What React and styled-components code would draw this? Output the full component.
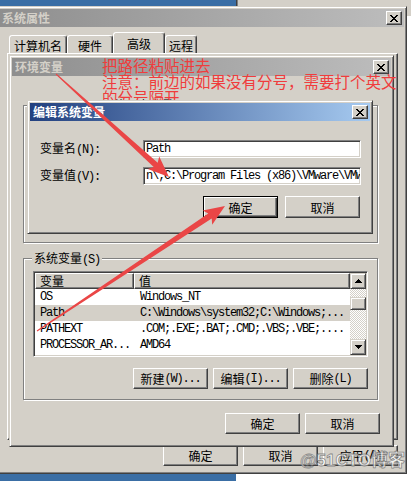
import React from "react";
import styled, { createGlobalStyle, css } from "styled-components";

const FACE = "#d4d0c8";
const UI_FONT = `"Noto Sans CJK SC", "Liberation Sans", sans-serif`;
const MONO = `"Liberation Mono", "Noto Sans CJK SC", monospace`;

const GlobalStyle = createGlobalStyle`
  html, body { margin: 0; padding: 0; background: #fff; }
  body { width: 411px; height: 481px; overflow: hidden; }
  *, *::before, *::after { box-sizing: border-box; }
`;

const Desktop = styled.div`
  position: relative;
  width: 411px;
  height: 481px;
  overflow: hidden;
  background: linear-gradient(to right, #3a6ea5 0 236px, #ffffff 236px);
  font-family: ${UI_FONT};
  font-size: 12px;
  color: #000;
`;

const BackWindow = styled.div`
  position: absolute;
  left: 236px;
  top: -4px;
  width: 190px;
  height: 22px;
  z-index: 1;
  background: ${FACE};
  border-left: 1px solid #404040;
  box-shadow: inset 1px 0 #808080, inset 0 -2px #fff;
`;

const Window = styled.div`
  position: absolute;
  left: ${(p) => p.$x}px;
  top: ${(p) => p.$y}px;
  width: ${(p) => p.$w}px;
  height: ${(p) => p.$h}px;
  z-index: ${(p) => p.$z};
  background: ${FACE};
  border: 1px solid;
  border-color: ${FACE} #404040 #404040 ${FACE};
  box-shadow: inset 1px 1px #fff, inset -1px -1px #808080;
  padding: 2px;
  display: flex;
  flex-direction: column;
`;

const TitleBar = styled.div`
  flex: none;
  height: 18px;
  display: flex;
  align-items: center;
  justify-content: space-between;
  padding: 0 2px 0 3px;
  background: ${(p) =>
    p.$active
      ? "linear-gradient(to right, #22407f, #a6caf0)"
      : "linear-gradient(to right, #8e8e8e, #bdbdbd)"};
`;

const TitleText = styled.span`
  color: ${(p) => (p.$active ? "#fff" : FACE)};
  font-weight: bold;
  font-size: 12px;
  line-height: 14px;
  white-space: nowrap;
`;

const CloseBox = styled.div`
  width: 16px;
  height: 14px;
  background: ${FACE};
  border: 1px solid;
  border-color: #fff #404040 #404040 #fff;
  box-shadow: inset -1px -1px #808080;
  display: flex;
  align-items: center;
  justify-content: center;
  padding-right: 1px;
`;

const CloseButton = () => (
  <CloseBox>
    <svg width="8" height="7" viewBox="0 0 8 7" shapeRendering="crispEdges">
      <path
        fill="#000"
        d="M0 0h2v1H0zM6 0h2v1H6zM1 1h2v1H1zM5 1h2v1H5zM2 2h4v1H2zM3 3h2v1H3zM2 4h4v1H2zM1 5h2v1H1zM5 5h2v1H5zM0 6h2v1H0zM6 6h2v1H6z"
      />
    </svg>
  </CloseBox>
);

const Latin = styled.span`
  font-family: ${MONO};
  letter-spacing: -1.2px;
`;

const Button = styled.div`
  flex: none;
  width: 75px;
  height: ${(p) => p.$h || 21}px;
  background: ${FACE};
  display: flex;
  align-items: center;
  justify-content: center;
  font-size: 12px;
  white-space: nowrap;
  border: 1px solid;
  border-color: #fff #404040 #404040 #fff;
  box-shadow: inset -1px -1px #808080;
  ${(p) =>
    p.$default &&
    css`
      border-color: #000;
      box-shadow: inset 1px 1px #fff, inset -1px -1px #404040,
        inset -2px -2px #808080;
    `}
`;

const ButtonRow = styled.div`
  flex: none;
  display: flex;
  justify-content: flex-end;
  gap: ${(p) => p.$gap}px;
  margin-top: ${(p) => p.$mt}px;
  margin-right: ${(p) => p.$mr || 0}px;
`;

/* ---------- 系统属性 ---------- */
const SysBody = styled.div`
  flex: 1;
  display: flex;
  flex-direction: column;
  padding: 0 6px 5px 8px;
`;

const TabStrip = styled.div`
  flex: none;
  height: 21px;
  margin-top: 5px;
  display: flex;
  align-items: flex-end;
  padding-left: 2px;
`;

const Tab = styled.div`
  width: ${(p) => p.$w}px;
  height: ${(p) => (p.$active ? 21 : 18)}px;
  background: ${FACE};
  border: 1px solid;
  border-bottom: none;
  border-color: #fff #404040 transparent #fff;
  border-radius: 3px 3px 0 0;
  box-shadow: inset -1px 0 #808080;
  display: flex;
  align-items: center;
  justify-content: center;
  padding-top: ${(p) => (p.$active ? 0 : 2)}px;
  font-size: 12px;
  white-space: nowrap;
`;

const TabPanel = styled.div`
  flex: 1;
  border: 1px solid;
  border-color: #fff #404040 #404040 #fff;
  box-shadow: inset -1px -1px #808080;
`;

/* ---------- 环境变量 ---------- */
const EnvBody = styled.div`
  flex: 1;
  display: flex;
  flex-direction: column;
  padding: 0 13px 0 11px;
`;

const GroupBox = styled.div`
  flex: none;
  height: ${(p) => (p.$h ? `${p.$h}px` : "auto")};
  margin-top: ${(p) => p.$mt}px;
  border: 1px solid #808080;
  box-shadow: inset 1px 1px #fff, 1px 1px #fff;
  padding: 0 9px 10px 9px;
  display: flex;
  flex-direction: column;
`;

const Caption = styled.div`
  width: fit-content;
  margin: -8px 0 0 -1px;
  padding: 0 2px;
  height: 14px;
  line-height: 14px;
  background: ${FACE};
  white-space: nowrap;
  font-size: 12px;
`;

const ListView = styled.div`
  flex: none;
  height: 86px;
  margin-top: 6px;
  display: flex;
  background: #fff;
  border: 1px solid;
  border-color: #808080 #fff #fff #808080;
  box-shadow: inset 1px 1px #404040, inset -1px -1px ${FACE};
  padding: 1px;
`;

const ListBody = styled.div`
  flex: 1;
  display: flex;
  flex-direction: column;
  overflow: hidden;
`;

const HeaderRow = styled.div`
  flex: none;
  display: flex;
  height: 16px;
`;

const HeaderCell = styled.div`
  flex: none;
  width: ${(p) => p.$w}px;
  background: ${FACE};
  border: 1px solid;
  border-color: #fff #404040 #404040 #fff;
  box-shadow: inset -1px -1px #808080;
  padding-left: 4px;
  display: flex;
  align-items: center;
  font-size: 12px;
  line-height: 14px;
`;

const Row = styled.div`
  flex: none;
  display: flex;
  height: 16px;
  align-items: center;
  background: ${(p) => (p.$selected ? FACE : "transparent")};
`;

const Cell = styled.div`
  flex: none;
  width: ${(p) => p.$w}px;
  padding-left: ${(p) => p.$pl}px;
  font-family: ${MONO};
  letter-spacing: -1.2px;
  font-size: 12px;
  white-space: nowrap;
  overflow: hidden;
`;

const ScrollBar = styled.div`
  flex: none;
  width: 16px;
  display: flex;
  flex-direction: column;
`;

const ScrollArrow = styled.div`
  flex: none;
  height: 16px;
  background: ${FACE};
  border: 1px solid;
  border-color: ${FACE} #404040 #404040 ${FACE};
  box-shadow: inset 1px 1px #fff, inset -1px -1px #808080;
  display: flex;
  align-items: center;
  justify-content: center;
`;

const Track = styled.div`
  flex: 1;
  background: repeating-conic-gradient(${FACE} 0 25%, #fff 0 50%) 0 0 / 2px 2px;
  padding-top: 8px;
`;

const Thumb = styled.div`
  height: 13px;
  background: ${FACE};
  border: 1px solid;
  border-color: ${FACE} #404040 #404040 ${FACE};
  box-shadow: inset 1px 1px #fff, inset -1px -1px #808080;
`;

const Triangle = ({ down }) => (
  <svg
    width="7"
    height="4"
    viewBox="0 0 7 4"
    shapeRendering="crispEdges"
    style={down ? { transform: "scaleY(-1)" } : undefined}
  >
    <path fill="#000" d="M3 0h1v1h1v1h1v1h1v1H0V3h1V2h1V1h1z" />
  </svg>
);

/* ---------- 编辑系统变量 ---------- */
const DialogBody = styled.div`
  flex: 1;
  display: flex;
  flex-direction: column;
  padding: 0 9px 0 10px;
`;

const Form = styled.div`
  margin-top: 19px;
  display: grid;
  grid-template-columns: 103px 218px;
  row-gap: 9px;
  align-items: center;
`;

const Label = styled.div`
  font-size: 12px;
  line-height: 14px;
  white-space: nowrap;
`;

const Field = styled.div`
  height: 18px;
  background: #fff;
  border: 1px solid;
  border-color: #808080 #fff #fff #808080;
  box-shadow: inset 1px 1px #404040, inset -1px -1px ${FACE};
  padding: 0 2px 0 2px;
  display: flex;
  align-items: center;
  overflow: hidden;
  white-space: nowrap;
  font-family: ${MONO};
  letter-spacing: -1.2px;
  font-size: 12px;
`;

/* ---------- overlays ---------- */
const Annotation = styled.div`
  position: absolute;
  left: 102px;
  top: 57px;
  z-index: 4;
  color: #f03c3c;
  font-family: ${UI_FONT};
  font-size: 15.5px;
  line-height: 16px;
  white-space: nowrap;
`;

const ArrowLayer = styled.svg`
  position: absolute;
  left: 0;
  top: 0;
  z-index: 6;
  pointer-events: none;
`;

const Watermark = styled.div`
  position: absolute;
  left: 300px;
  top: 451px;
  z-index: 7;
  font-family: "Liberation Sans", "Noto Sans CJK SC", sans-serif;
  font-weight: bold;
  font-size: 17px;
  line-height: 20px;
  color: rgba(255, 255, 255, 0.75);
  -webkit-text-stroke: 0.8px rgba(110, 110, 110, 0.8);
  white-space: nowrap;
`;

function arrowPoints(x1, y1, x2, y2, w1, w2, hl, hw) {
  const dx = x2 - x1;
  const dy = y2 - y1;
  const len = Math.hypot(dx, dy);
  const ux = dx / len;
  const uy = dy / len;
  const nx = -uy;
  const ny = ux;
  const bx = x2 - ux * hl;
  const by = y2 - uy * hl;
  const p = (x, y, s) => `${(x + nx * s).toFixed(1)},${(y + ny * s).toFixed(1)}`;
  return [
    p(x1, y1, w1 / 2),
    p(bx, by, w2 / 2),
    p(bx - ux * 3, by - uy * 3, hw / 2),
    `${x2},${y2}`,
    p(bx - ux * 3, by - uy * 3, -hw / 2),
    p(bx, by, -w2 / 2),
    p(x1, y1, -w1 / 2),
  ].join(" ");
}

const listRows = [
  { name: "OS", value: "Windows_NT" },
  { name: "Path", value: "C:\\Windows\\system32;C:\\Windows;...", selected: true },
  { name: "PATHEXT", value: ".COM;.EXE;.BAT;.CMD;.VBS;.VBE;...." },
  { name: "PROCESSOR_AR...", value: "AMD64" },
];

export default function App() {
  return (
    <>
      <GlobalStyle />
      <Desktop>
        <BackWindow />

        <Window $x={-4} $y={6} $w={411} $h={468} $z={2}>
          <TitleBar>
            <TitleText>系统属性</TitleText>
            <CloseButton />
          </TitleBar>
          <SysBody>
            <TabStrip>
              <Tab $w={58}>计算机名</Tab>
              <Tab $w={46}>硬件</Tab>
              <Tab $w={52} $active>
                高级
              </Tab>
              <Tab $w={32}>远程</Tab>
            </TabStrip>
            <TabPanel />
            <ButtonRow $gap={5} $mt={5}>
              <Button>确定</Button>
              <Button>取消</Button>
              <Button>
                应用<Latin>(A)</Latin>
              </Button>
            </ButtonRow>
          </SysBody>
        </Window>

        <Window $x={9} $y={55} $w={385} $h={392} $z={3}>
          <TitleBar>
            <TitleText>环境变量</TitleText>
            <CloseButton />
          </TitleBar>
          <EnvBody>
            <GroupBox $mt={29} $h={138}>
              <Caption>
                Administrator 的用户变量<Latin>(U)</Latin>
              </Caption>
            </GroupBox>
            <GroupBox $mt={15}>
              <Caption>
                系统变量<Latin>(S)</Latin>
              </Caption>
              <ListView>
                <ListBody>
                  <HeaderRow>
                    <HeaderCell $w={99}>变量</HeaderCell>
                    <HeaderCell $w={216}>值</HeaderCell>
                  </HeaderRow>
                  {listRows.map((r) => (
                    <Row key={r.name} $selected={r.selected}>
                      <Cell $w={99} $pl={5}>
                        {r.name}
                      </Cell>
                      <Cell $w={216} $pl={6}>
                        {r.value}
                      </Cell>
                    </Row>
                  ))}
                </ListBody>
                <ScrollBar>
                  <ScrollArrow>
                    <Triangle />
                  </ScrollArrow>
                  <Track>
                    <Thumb />
                  </Track>
                  <ScrollArrow>
                    <Triangle down />
                  </ScrollArrow>
                </ScrollBar>
              </ListView>
              <ButtonRow $gap={5} $mt={11}>
                <Button>
                  新建<Latin>(W)...</Latin>
                </Button>
                <Button>
                  编辑<Latin>(I)...</Latin>
                </Button>
                <Button>
                  删除<Latin>(L)</Latin>
                </Button>
              </ButtonRow>
            </GroupBox>
            <ButtonRow $gap={5} $mt={13} $mr={-2}>
              <Button>确定</Button>
              <Button>取消</Button>
            </ButtonRow>
          </EnvBody>
        </Window>

        <Annotation>
          <div>把路径粘贴进去</div>
          <div>注意：前边的如果没有分号，需要打个英文</div>
          <div>的分号隔开</div>
        </Annotation>

        <Window $x={27} $y={100} $w={346} $h={134} $z={5}>
          <TitleBar $active>
            <TitleText $active>编辑系统变量</TitleText>
            <CloseButton />
          </TitleBar>
          <DialogBody>
            <Form>
              <Label>
                变量名<Latin>(N):</Latin>
              </Label>
              <Field>Path</Field>
              <Label>
                变量值<Latin>(V):</Latin>
              </Label>
              <Field>n\;C:\Program Files (x86)\VMware\VMware Workstation\bin\</Field>
            </Form>
            <ButtonRow $gap={7} $mt={11} $mr={1}>
              <Button $default $h={22}>
                确定
              </Button>
              <Button $h={22}>取消</Button>
            </ButtonRow>
          </DialogBody>
        </Window>

        <ArrowLayer width="411" height="481" viewBox="0 0 411 481">
          <polygon
            fill="#ea4646"
            points={arrowPoints(56, 74, 169, 177, 1, 6, 18, 17)}
          />
          <polygon
            fill="#ea4646"
            points={arrowPoints(37, 331, 225, 206, 1, 6, 18, 17)}
          />
        </ArrowLayer>

        <Watermark>@51CTO博客</Watermark>
      </Desktop>
    </>
  );
}
